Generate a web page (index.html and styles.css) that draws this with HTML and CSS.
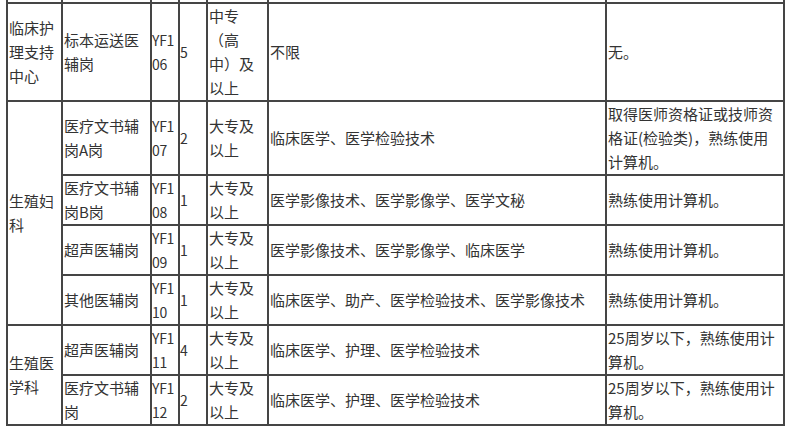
FILE: index.html
```html
<!DOCTYPE html>
<html lang="zh-CN">
<head>
<meta charset="utf-8">
<link rel="stylesheet" href="styles.css">
</head>
<body>
<div class="wrap">
<table class="jobs">
  <colgroup>
    <col class="c1"><col class="c2"><col class="c3"><col class="c4"><col class="c5"><col class="c6"><col class="c7">
  </colgroup>
  <tbody>
    <tr class="cut"><td></td><td></td><td></td><td></td><td></td><td></td><td></td></tr>
    <tr>
      <td>临床护理支持中心</td>
      <td>标本运送医辅岗</td>
      <td class="code">YF106</td>
      <td class="code">5</td>
      <td>中专（高中）及以上</td>
      <td>不限</td>
      <td>无。</td>
    </tr>
    <tr>
      <td rowspan="4">生殖妇科</td>
      <td>医疗文书辅岗A岗</td>
      <td class="code">YF107</td>
      <td class="code">2</td>
      <td>大专及以上</td>
      <td>临床医学、医学检验技术</td>
      <td>取得医师资格证或技师资格证(检验类)，熟练使用计算机。</td>
    </tr>
    <tr>
      <td>医疗文书辅岗B岗</td>
      <td class="code">YF108</td>
      <td class="code">1</td>
      <td>大专及以上</td>
      <td>医学影像技术、医学影像学、医学文秘</td>
      <td>熟练使用计算机。</td>
    </tr>
    <tr>
      <td>超声医辅岗</td>
      <td class="code">YF109</td>
      <td class="code">1</td>
      <td>大专及以上</td>
      <td>医学影像技术、医学影像学、临床医学</td>
      <td>熟练使用计算机。</td>
    </tr>
    <tr>
      <td>其他医辅岗</td>
      <td class="code">YF110</td>
      <td class="code">1</td>
      <td>大专及以上</td>
      <td>临床医学、助产、医学检验技术、医学影像技术</td>
      <td>熟练使用计算机。</td>
    </tr>
    <tr>
      <td rowspan="2">生殖医学科</td>
      <td>超声医辅岗</td>
      <td class="code">YF111</td>
      <td class="code">4</td>
      <td>大专及以上</td>
      <td>临床医学、护理、医学检验技术</td>
      <td>25周岁以下，熟练使用计算机。</td>
    </tr>
    <tr>
      <td>医疗文书辅岗</td>
      <td class="code">YF112</td>
      <td class="code">2</td>
      <td>大专及以上</td>
      <td>临床医学、护理、医学检验技术</td>
      <td>25周岁以下，熟练使用计算机。</td>
    </tr>
  </tbody>
</table>
</div>
</body>
</html>
```

FILE: styles.css
```css
html, body {
  margin: 0;
  padding: 0;
  background: #ffffff;
}

.wrap {
  padding-left: 6px;
  overflow: hidden;
  height: 429px;
}

.jobs {
  border-collapse: collapse;
  table-layout: fixed;
  width: 777px;
  margin-top: -18px;
  font-family: "Noto Sans CJK SC", "Noto Sans", sans-serif;
  font-size: 15px;
  line-height: 24px;
  color: #333333;
  text-spacing-trim: space-all;
}

.jobs td {
  border: 2px solid #454545;
  padding: 0 1px;
  vertical-align: middle;
  text-align: left;
  word-break: break-all;
}

.jobs td.code {
  padding: 0;
  font-size: 14px;
  letter-spacing: -0.3px;
}

.jobs .cut td {
  height: 18px;
}

.c1 { width: 55px; }
.c2 { width: 89px; }
.c3 { width: 28px; }
.c4 { width: 28px; }
.c5 { width: 61px; }
.c6 { width: 338px; }
.c7 { width: 178px; }
```
